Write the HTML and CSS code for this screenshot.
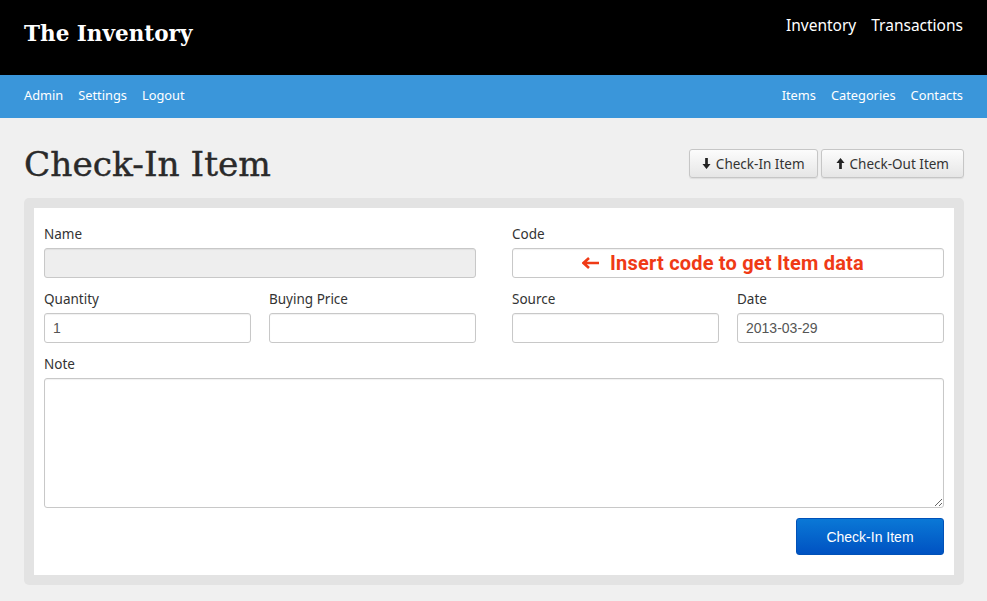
FILE: index.html
```html
<!DOCTYPE html>
<html lang="en">
<head>
<meta charset="utf-8">
<title>Check-In Item</title>
<link rel="stylesheet" href="styles.css">
</head>
<body>
<header class="topbar">
  <div class="brand">The Inventory</div>
  <nav class="main-nav">
    <a href="#">Inventory</a>
    <a href="#">Transactions</a>
  </nav>
</header>
<div class="subbar">
  <nav class="sub-left">
    <a href="#">Admin</a>
    <a href="#">Settings</a>
    <a href="#">Logout</a>
  </nav>
  <nav class="sub-right">
    <a href="#">Items</a>
    <a href="#">Categories</a>
    <a href="#">Contacts</a>
  </nav>
</div>
<main class="page">
  <div class="page-head">
    <h1 class="title">Check-In Item</h1>
    <div class="actions">
      <button class="btn"><svg class="ico" viewBox="0 0 10 12" width="9" height="11"><path d="M3.5 0h3v6.5H9.5L5 12 0.5 6.5H3.5z" fill="#222"/></svg>Check-In Item</button>
      <button class="btn wide"><svg class="ico" viewBox="0 0 10 12" width="9" height="11"><path d="M3.5 12h3V5.5H9.5L5 0 0.5 5.5H3.5z" fill="#222"/></svg>Check-Out Item</button>
    </div>
  </div>
  <section class="panel">
    <form class="form">
      <div class="row two">
        <div class="field">
          <label>Name</label>
          <input class="input disabled" type="text" disabled>
        </div>
        <div class="field">
          <label>Code</label>
          <div class="input code"><svg class="arrow" viewBox="0 0 18 12" width="18" height="12"><path d="M1 6h16M7 1 1.5 6 7 11" fill="none" stroke="#ef3a16" stroke-width="2.6"/></svg><span class="hint">Insert code to get Item data</span></div>
        </div>
      </div>
      <div class="row two">
        <div class="row pair">
          <div class="field">
            <label>Quantity</label>
            <input class="input" type="text" value="1">
          </div>
          <div class="field">
            <label>Buying Price</label>
            <input class="input" type="text">
          </div>
        </div>
        <div class="row pair">
          <div class="field">
            <label>Source</label>
            <input class="input" type="text">
          </div>
          <div class="field">
            <label>Date</label>
            <input class="input" type="text" value="2013-03-29">
          </div>
        </div>
      </div>
      <div class="field">
        <label>Note</label>
        <textarea class="input note"></textarea>
      </div>
      <div class="submit-row">
        <button type="button" class="btn-primary">Check-In Item</button>
      </div>
    </form>
  </section>
</main>
</body>
</html>
```

FILE: styles.css
```css
* { box-sizing: border-box; }
html, body { margin: 0; padding: 0; }
body {
  background: #f0f0f0;
  font-family: "Noto Sans", "DejaVu Sans", sans-serif;
  color: #333;
}
a { text-decoration: none; }

.topbar {
  height: 75px;
  background: #000;
  display: flex;
  justify-content: space-between;
  align-items: flex-start;
  padding: 0 24px;
}
.brand {
  font-family: "DejaVu Serif", serif;
  font-weight: bold;
  font-size: 21.5px;
  color: #fff;
  margin-top: 21px;
}
.main-nav {
  display: flex;
  gap: 15px;
  margin-top: 14px;
}
.main-nav a {
  color: #fff;
  font-size: 15.5px;
}

.subbar {
  height: 43px;
  background: #3a96da;
  display: flex;
  justify-content: space-between;
  align-items: center;
  padding: 0 24px 4px;
}
.subbar nav { display: flex; gap: 15px; }
.subbar a {
  color: #fff;
  font-size: 12.8px;
}

.page { padding: 0 23px 0 24px; }
.page-head {
  display: flex;
  justify-content: space-between;
  align-items: flex-start;
  height: 80px;
}
.title {
  margin: 26px 0 0;
  font-family: "DejaVu Serif", serif;
  font-weight: normal;
  font-size: 34.4px;
  color: #2a2a2a;
  -webkit-text-stroke: 0.4px #2a2a2a;
}
.actions {
  display: flex;
  gap: 3px;
  margin-top: 31px;
}
.btn {
  height: 29px;
  padding: 0 12px;
  border: 1px solid #c6c6c6;
  border-radius: 3px;
  background: linear-gradient(#fcfcfc, #e6e6e6);
  box-shadow: 0 1px 1px rgba(0,0,0,0.08);
  font-family: "Noto Sans", sans-serif;
  font-size: 13.5px;
  color: #333;
  display: flex;
  align-items: center;
  gap: 5px;
}
.btn.wide { padding: 0 14px; }
.ico { display: block; }

.panel {
  background: #e3e3e3;
  border-radius: 5px;
  padding: 10px;
}
.form {
  background: #fff;
  padding: 17px 10px 20px;
  display: flex;
  flex-direction: column;
}
.row { display: flex; }
.row.two { gap: 36px; }
.row.two > * { flex: 1 1 0; }
.row.pair { gap: 18px; }
.row.pair > * { flex: 1 1 0; }
.field { display: flex; flex-direction: column; min-width: 0; }
label {
  font-size: 13.5px;
  color: #333;
  height: 19px;
  line-height: 19px;
  margin-bottom: 4px;
}
.input {
  height: 30px;
  border: 1px solid #c8c8c8;
  border-radius: 3px;
  background: #fff;
  box-shadow: inset 0 1px 1px rgba(0,0,0,0.06);
  font-family: "Liberation Sans", Arial, sans-serif;
  font-size: 14px;
  color: #555;
  padding: 0 8px;
  margin-bottom: 12px;
  width: 100%;
  outline: none;
}
.input.disabled { background: #eeeeee; }
.input.code {
  display: flex;
  align-items: center;
  justify-content: center;
  gap: 10px;
  padding: 0 10px 0 0;
}
.arrow { display: block; }
.hint {
  font-family: "Roboto", "Liberation Sans", sans-serif;
  font-weight: bold;
  font-size: 20px;
  color: #ef3a16;
  letter-spacing: 0.2px;
}
.input.note {
  height: 130px;
  resize: vertical;
  margin-bottom: 10px;
}
.submit-row {
  display: flex;
  justify-content: flex-end;
}
.btn-primary {
  width: 148px;
  height: 37px;
  border: 1px solid #0051b8;
  border-radius: 3px;
  background: linear-gradient(#0a78d6, #0052c2);
  color: #fff;
  font-family: "Liberation Sans", Arial, sans-serif;
  font-size: 14px;
}
```
